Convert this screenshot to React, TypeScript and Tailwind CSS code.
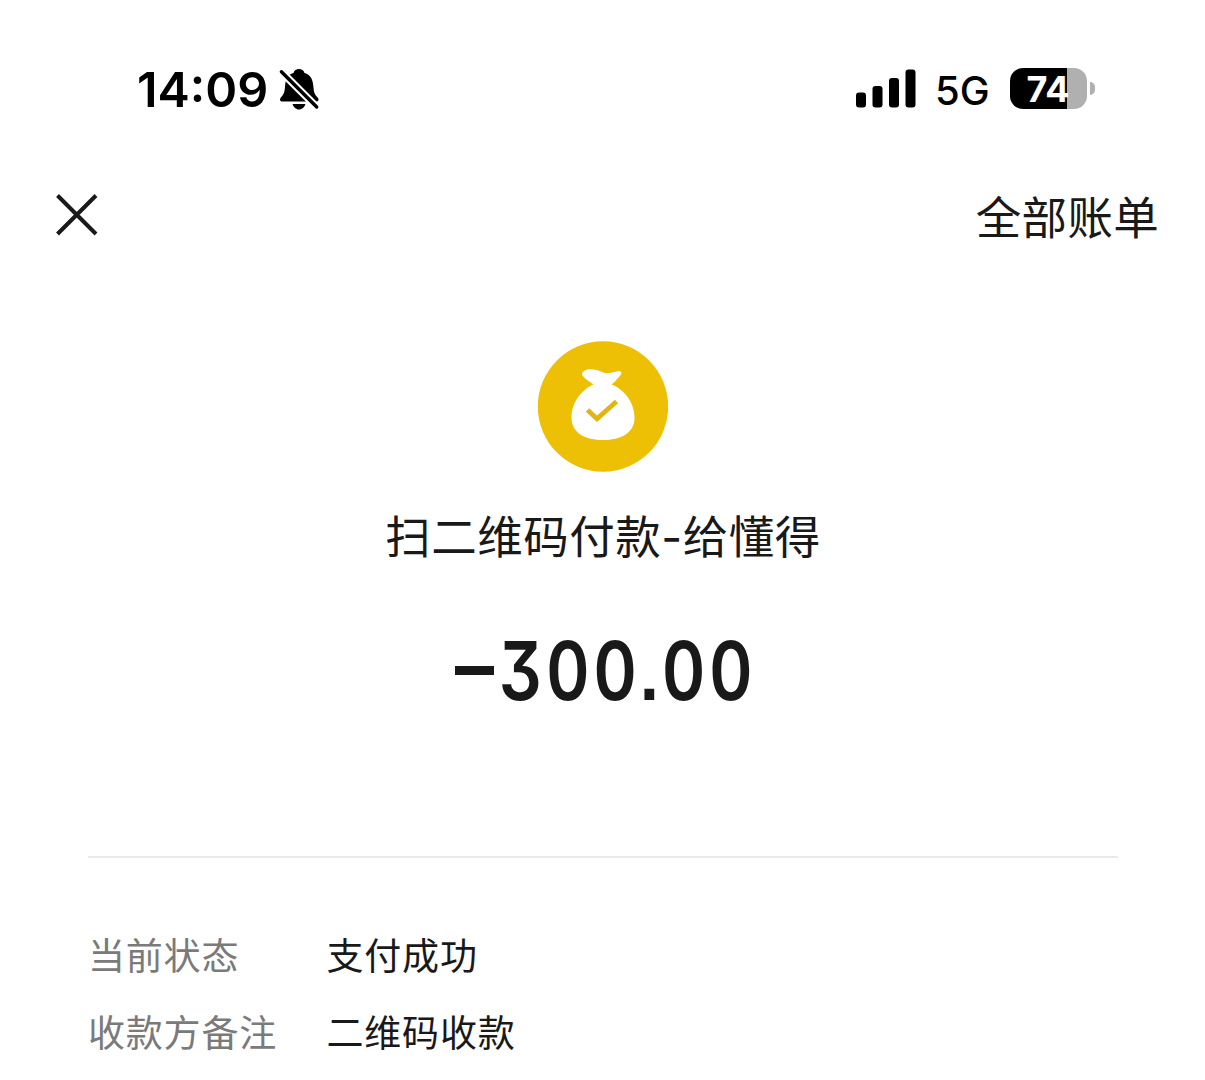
type DetailRow = { label: string; value: string };

const details: DetailRow[] = [
  { label: "当前状态", value: "支付成功" },
  { label: "收款方备注", value: "二维码收款" },
];

export default function App() {
  return (
    <main className="w-[1205px] h-[1080px] overflow-hidden bg-white text-[#191919] font-['Noto_Sans_CJK_SC',sans-serif]">
      <StatusBar />

      <header className="flex items-center justify-between h-[92px] mt-[38px] pl-[56px] pr-[46px]">
        <button aria-label="关闭">
          <svg className="w-[42px] h-[42px]" viewBox="0 0 42 42" fill="none" stroke="#191919" strokeWidth="4">
            <path d="M1.500 1.500 40 40M40 1.500 1.500 40" />
          </svg>
        </button>
        <button className="text-[45.5px] leading-[66px] tracking-[0.3px]">全部账单</button>
      </header>

      <section className="flex flex-col items-center mt-[80px]">
        <MoneyBag />
        <h1 className="mt-[29px] ml-px text-[45.5px] leading-[66px] tracking-[0.5px]">
          扫二维码付款<span className="font-['Inter',sans-serif]">-</span>给懂得
        </h1>
        <Amount />
      </section>

      <section className="mt-[146px] ml-[88px] mr-[87px] pt-[57px] border-t-2 border-[#e9e9e9]">
        {details.map((row) => (
          <div key={row.label} className="flex h-[77px] items-center text-[37px] leading-[52px] tracking-[0.8px]">
            <span className="w-[238.5px] text-[#7a7a7a]">{row.label}</span>
            <span>{row.value}</span>
          </div>
        ))}
      </section>
    </main>
  );
}

function StatusBar() {
  return (
    <div className="flex items-center justify-between h-[131px] pt-[46px] pl-[137px] pr-[110px] text-black font-['Inter',sans-serif]">
      <div className="flex items-center">
        <span className="w-[141px] pt-[2px] text-[48.5px] leading-[58px] font-semibold">14:09</span>
        <BellOff />
      </div>
      <div className="flex items-center">
        <svg className="w-[61px] h-[39px]" viewBox="0 0 61 39">
          <rect x="1" y="23.5" width="10" height="15" rx="3" />
          <rect x="17.5" y="17" width="10" height="21.5" rx="3" />
          <rect x="34" y="9" width="10" height="29.5" rx="3" />
          <rect x="50.500" y="0.5" width="10" height="38" rx="3" />
        </svg>
        <span className="ml-[19px] w-[75px] pt-[4px] text-[40px] leading-[48px] font-[450]">5G</span>
        <div className="flex items-center gap-[3px]">
          <div className="flex items-center justify-center w-[77px] h-[41px] rounded-[13px] bg-[linear-gradient(to_right,#000_57px,#b0b0b0_57px)]">
            <span className="mr-px text-[36px] leading-[40px] font-bold text-white tracking-[-0.2px]">74</span>
          </div>
          <div className="w-[5px] h-[13px] rounded-r-full bg-[#b0b0b0]" />
        </div>
      </div>
    </div>
  );
}

function BellOff() {
  return (
    <svg className="w-[42px] h-[44px]" viewBox="0 0 42 44">
      <path d="M4 34.500c-2 0-2.600-2-1.500-3.500 3-3.500 4-5 4.500-11C7.500 12 9.500 7.500 15.500 6c1-3 2.700-4 5.500-4s4.500 1 5.500 4c6 1.500 8.500 6.500 9 14.500.5 6 1.500 7 4.500 10.500 1.200 1.500.5 3.500-1.500 3.500Z" />
      <path d="M14.500 37h13c-1 3-3.500 5.500-6.500 5.500s-5.500-2.500-6.500-5.500Z" />
      <path d="M1 2.300 41 42.300" stroke="#fff" strokeWidth="7.600" />
      <path d="M3.400 4.700 38.700 40" stroke="#000" strokeWidth="3.400" strokeLinecap="round" />
    </svg>
  );
}

function MoneyBag() {
  return (
    <svg className="w-[131px] h-[131px]" viewBox="-0.5 0 131 131">
      <circle cx="65.500" cy="65.500" r="65.200" fill="#edc006" />
      <path
        d="M56 43.500C51.500 40 45.500 37 44.500 33.500 44.500 29.500 50 27.500 56 28.500c6 .5 10 4.500 16 3.500 4-.5 8-2.500 11-1.500 2 1 .5 3.500-2 6-2.500 3-4.500 5-7 7C84 47 97 59 97 77c0 15-14 22-31.500 22S34 92 34 77C34 59 47 47 56 43.500Z"
        fill="#fff"
      />
      <path d="M50 69 59.500 77.700 79 60.500" fill="none" stroke="#e3b513" strokeWidth="4.800" />
    </svg>
  );
}

function Amount() {
  return (
    <div className="flex items-center w-[295px] h-[80px] mt-[59px] font-['Inter',sans-serif]">
      <div className="shrink-0 w-[39px] h-[9px] bg-[#191919]" />
      <span className="ml-[5px] pt-[2px] text-[80.5px] leading-[80px] font-semibold tracking-[4px] whitespace-nowrap [font-feature-settings:'cv09','tnum','ss07'] origin-left scale-x-[.84]">
        300.00
      </span>
    </div>
  );
}
